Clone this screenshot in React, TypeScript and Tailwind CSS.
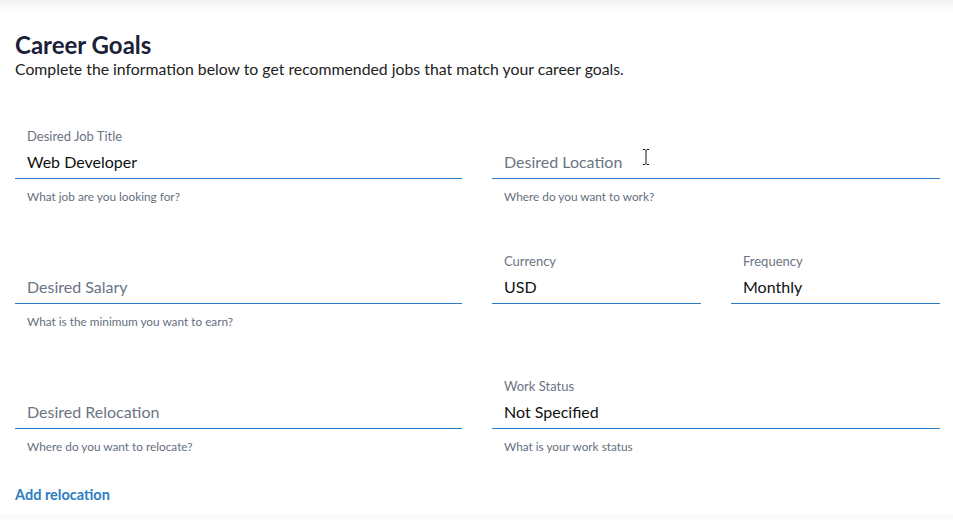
import React from 'react';

interface FieldProps {
  label?: string;
  value?: string;
  placeholder?: string;
  helper?: string;
  className?: string;
}

function Field({ label, value, placeholder, helper, className = '' }: FieldProps) {
  return (
    <div className={`flex flex-col ${className}`}>
      <div className="h-[18px] px-3 text-[13px] leading-[18px] text-[#6b7483]">{label}</div>
      <div className="flex h-[34px] items-center border-b border-[#2b7dc3] px-3">
        {value ? (
          <span className="text-[16px] leading-[20px] text-[#111]">{value}</span>
        ) : (
          <span className="text-[16px] leading-[20px] text-[#6b7483]">{placeholder}</span>
        )}
      </div>
      {helper && (
        <div className="mt-[11px] px-3 text-[11.8px] leading-[14px] text-[#656f7e]">{helper}</div>
      )}
    </div>
  );
}

export default function App() {
  return (
    <div className="min-h-[520px] w-[953px] bg-[#fafafa] font-['Lato','Open_Sans',sans-serif]">
      <div className="relative h-[515px] bg-white">
        {/* top shadow */}
        <div className="h-[12px] bg-linear-to-b from-[#f1f1f1] to-white" />

        <div className="px-[15px] pt-[18px]">
          <h1 className="text-[24px] font-bold leading-[29px] text-[#1b2138]">Career Goals</h1>
          <p className="text-[15.8px] leading-[19px] text-[#222]">
            Complete the information below to get recommended jobs that match your career goals.
          </p>

          <div className="mt-[49px] grid w-[925px] grid-cols-[447px_448px] gap-x-[30px]">
            <Field
              className="h-[125px]"
              label="Desired Job Title"
              value="Web Developer"
              helper="What job are you looking for?"
            />
            <Field
              className="h-[125px]"
              placeholder="Desired Location"
              helper="Where do you want to work?"
            />

            <Field
              className="h-[125px]"
              placeholder="Desired Salary"
              helper="What is the minimum you want to earn?"
            />
            <div className="grid h-[125px] grid-cols-2 gap-x-[30px]">
              <Field label="Currency" value="USD" />
              <Field label="Frequency" value="Monthly" />
            </div>

            <Field placeholder="Desired Relocation" helper="Where do you want to relocate?" />
            <Field label="Work Status" value="Not Specified" helper="What is your work status" />
          </div>

          <button className="mt-[32px] text-[14.5px] font-bold leading-[17px] text-[#2b7dc3]">
            Add relocation
          </button>
        </div>

        {/* mouse cursor */}
        <svg className="absolute left-[641px] top-[148px]" width="10" height="18" viewBox="0 0 10 18">
          <path
            d="M2 1.5h2l1 1 1-1h2M5 2.5v13M2 16.5h2l1-1 1 1h2"
            fill="none"
            stroke="#fff"
            strokeWidth="2.5"
          />
          <path d="M2 1.5h2l1 1 1-1h2M5 2.5v13M2 16.5h2l1-1 1 1h2" fill="none" stroke="#111" strokeWidth="1" />
        </svg>
      </div>
    </div>
  );
}
